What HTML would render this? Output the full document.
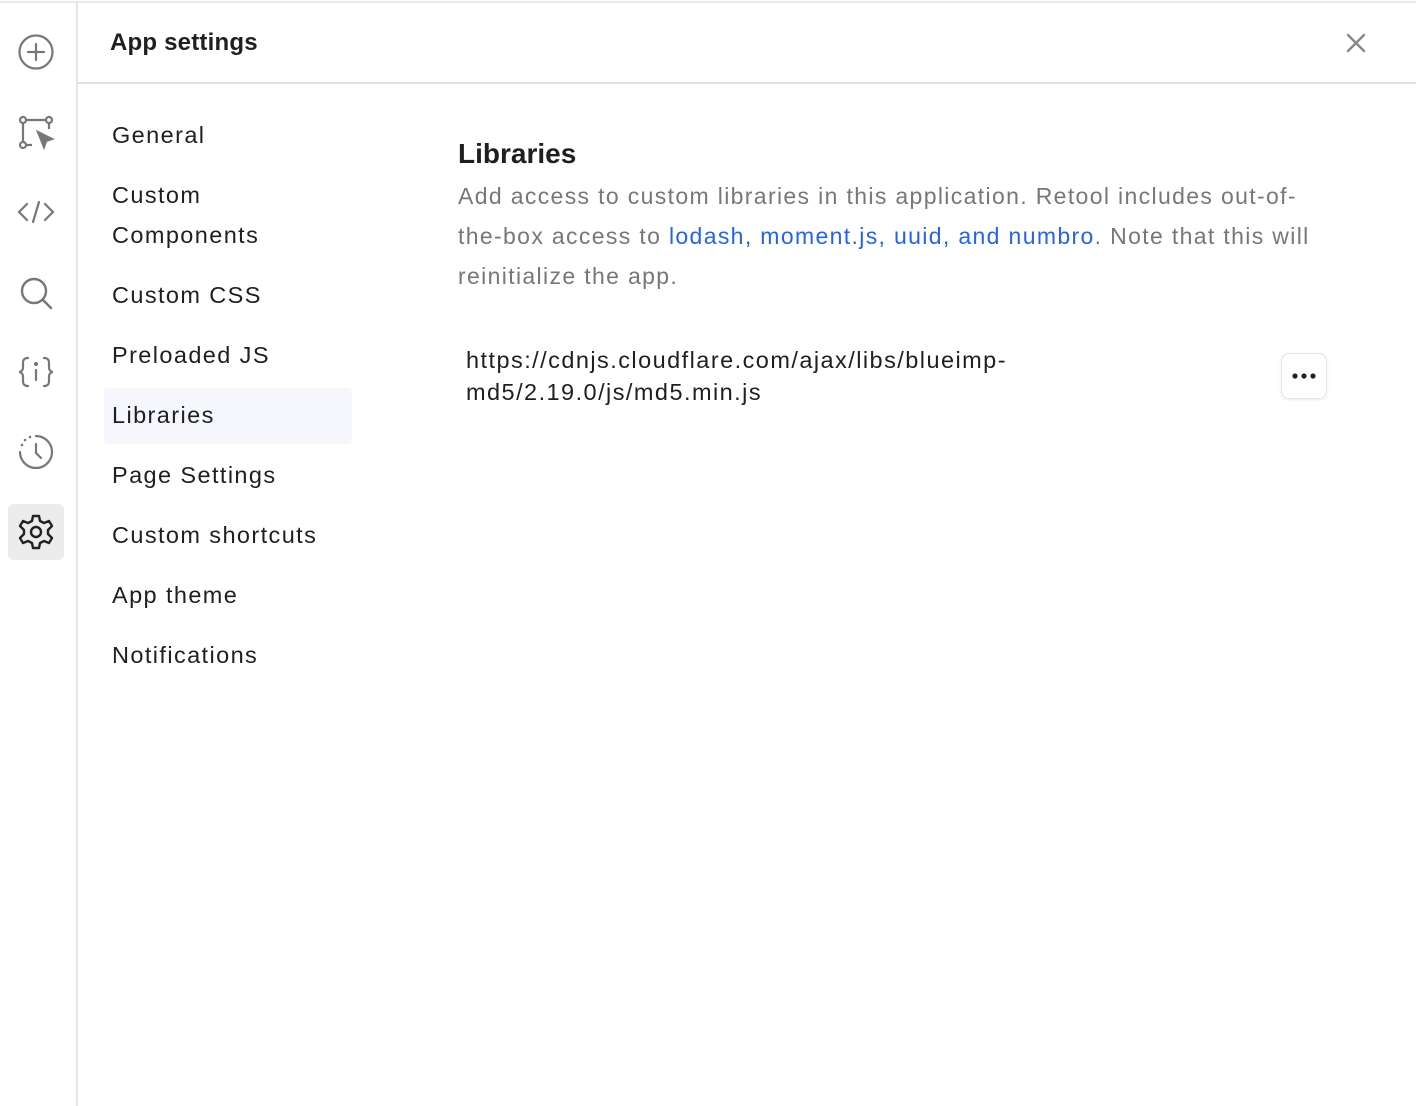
<!DOCTYPE html>
<html><head><style>
*{margin:0;padding:0;box-sizing:border-box}
body{width:1416px;height:1106px;background:#fff;font-family:"Liberation Sans",sans-serif;position:relative;overflow:hidden;color:#1a1a1a}
.top{position:absolute;left:0;top:0;width:1416px;height:3px;border-bottom:2px solid #e8e8e8}
.side{position:absolute;left:0;top:3px;width:78px;height:1103px;border-right:2px solid #e6e6e6}
.ic{position:absolute;left:16px;width:40px;height:40px}
.sel{position:absolute;left:8px;top:501px;width:56px;height:56px;background:#ececec;border-radius:6px}
.hdr{position:absolute;left:78px;top:3px;width:1338px;height:81px;border-bottom:2px solid #e0e0e0}
.hdr h1{position:absolute;left:32px;top:26px;font-size:24px;font-weight:bold;color:#1f1f1f;letter-spacing:0.2px}
.nav div{position:absolute;left:112px;font-size:23.5px;color:#1f1f1f;line-height:54px;letter-spacing:1.4px;white-space:nowrap}
.hl{position:absolute;left:104px;top:388px;width:248px;height:56px;background:#f5f7fc;border-radius:4px}
h2{position:absolute;left:458px;top:138px;font-size:28px;font-weight:bold;color:#1f1f1f}
.desc{position:absolute;left:458px;top:176px;font-size:23px;line-height:40px;color:#777;white-space:nowrap;letter-spacing:1.35px}
.desc a{color:#2563eb;text-decoration:none}
.url{position:absolute;left:466px;top:344px;font-size:23.5px;line-height:32px;color:#1f1f1f;letter-spacing:1.45px;white-space:nowrap}
.more{position:absolute;left:1281px;top:353px;width:46px;height:46px;border:1px solid #e6e6e6;border-radius:8px;box-shadow:0 1px 3px rgba(0,0,0,.08)}
</style></head><body>
<div class="top"></div>
<div class="side">
<div class="sel"></div>
<svg class="ic" style="top:29px" viewBox="0 0 40 40" fill="none" stroke="#777" stroke-width="2.2" stroke-linecap="round"><circle cx="20" cy="20" r="16.5"/><path d="M20 12v16M12 20h16"/></svg>
<svg class="ic" style="top:109px" viewBox="0 0 40 40" fill="none" stroke="#777" stroke-width="2.2"><circle cx="7" cy="8" r="3"/><circle cx="33" cy="8" r="3"/><circle cx="7" cy="33" r="3"/><path d="M10 8h20M7 11v19M10 33h6M33 11v6"/><path d="M22 20l14 7-6 2-2 6z" fill="#777"/></svg>
<svg class="ic" style="top:189px" viewBox="0 0 40 40" fill="none" stroke="#777" stroke-width="2.2" stroke-linecap="round"><path d="M11 12l-8 8 8 8M29 12l8 8-8 8M23 10l-6 20"/></svg>
<svg class="ic" style="top:269px" viewBox="0 0 40 40" fill="none" stroke="#777" stroke-width="2.4" stroke-linecap="round"><circle cx="18" cy="19" r="12"/><path d="M27 28l8 8"/></svg>
<svg class="ic" style="top:349px" viewBox="0 0 40 40" fill="none" stroke="#777" stroke-width="2.2" stroke-linecap="round"><path d="M12 6c-4 0-5 2-5 5v5c0 2-2 4-4 4 2 0 4 2 4 4v5c0 3 1 5 5 5M28 6c4 0 5 2 5 5v5c0 2 2 4 4 4-2 0-4 2-4 4v5c0 3-1 5-5 5M20 18v10"/><circle cx="20" cy="12" r="1" fill="#777"/></svg>
<svg class="ic" style="top:429px" viewBox="0 0 40 40" fill="none" stroke="#777" stroke-width="2.2" stroke-linecap="round"><path d="M20 4a16 16 0 1 1-16 16" /><path d="M6 13v0M9 8v0M14 5v0" stroke-width="2.6"/><path d="M20 12v9l5 5"/></svg>
<svg class="ic" style="top:509px" viewBox="0 0 40 40" fill="none" stroke="#222" stroke-width="2.4" stroke-linejoin="round"><path d="M17 4h6l1 5 4 2 5-2 3 5-4 4v4l4 4-3 5-5-2-4 2-1 5h-6l-1-5-4-2-5 2-3-5 4-4v-4l-4-4 3-5 5 2 4-2z"/><circle cx="20" cy="20" r="5"/></svg>
</div>
<div class="hdr"><h1>App settings</h1>
<svg style="position:absolute;left:1268px;top:30px" width="20" height="20" viewBox="0 0 20 20" stroke="#888" stroke-width="2.4" stroke-linecap="round"><path d="M2 2l16 16M18 2L2 18"/></svg></div>
<div class="hl"></div>
<div class="nav">
<div style="top:108px">General</div>
<div style="top:168px">Custom</div>
<div style="top:208px">Components</div>
<div style="top:268px">Custom CSS</div>
<div style="top:328px">Preloaded JS</div>
<div style="top:388px">Libraries</div>
<div style="top:448px">Page Settings</div>
<div style="top:508px">Custom shortcuts</div>
<div style="top:568px">App theme</div>
<div style="top:628px">Notifications</div>
</div>
<h2>Libraries</h2>
<div class="desc">Add access to custom libraries in this application. Retool includes out-of-<br>the-box access to <a>lodash, moment.js, uuid, and numbro</a>. Note that this will<br>reinitialize the app.</div>
<div class="url">https://cdnjs.cloudflare.com/ajax/libs/blueimp-<br>md5/2.19.0/js/md5.min.js</div>
<div class="more"><svg width="46" height="46" viewBox="0 0 46 46" fill="#222"><circle cx="13" cy="22" r="2.6"/><circle cx="22" cy="22" r="2.6"/><circle cx="31" cy="22" r="2.6"/></svg></div>
</body></html>
